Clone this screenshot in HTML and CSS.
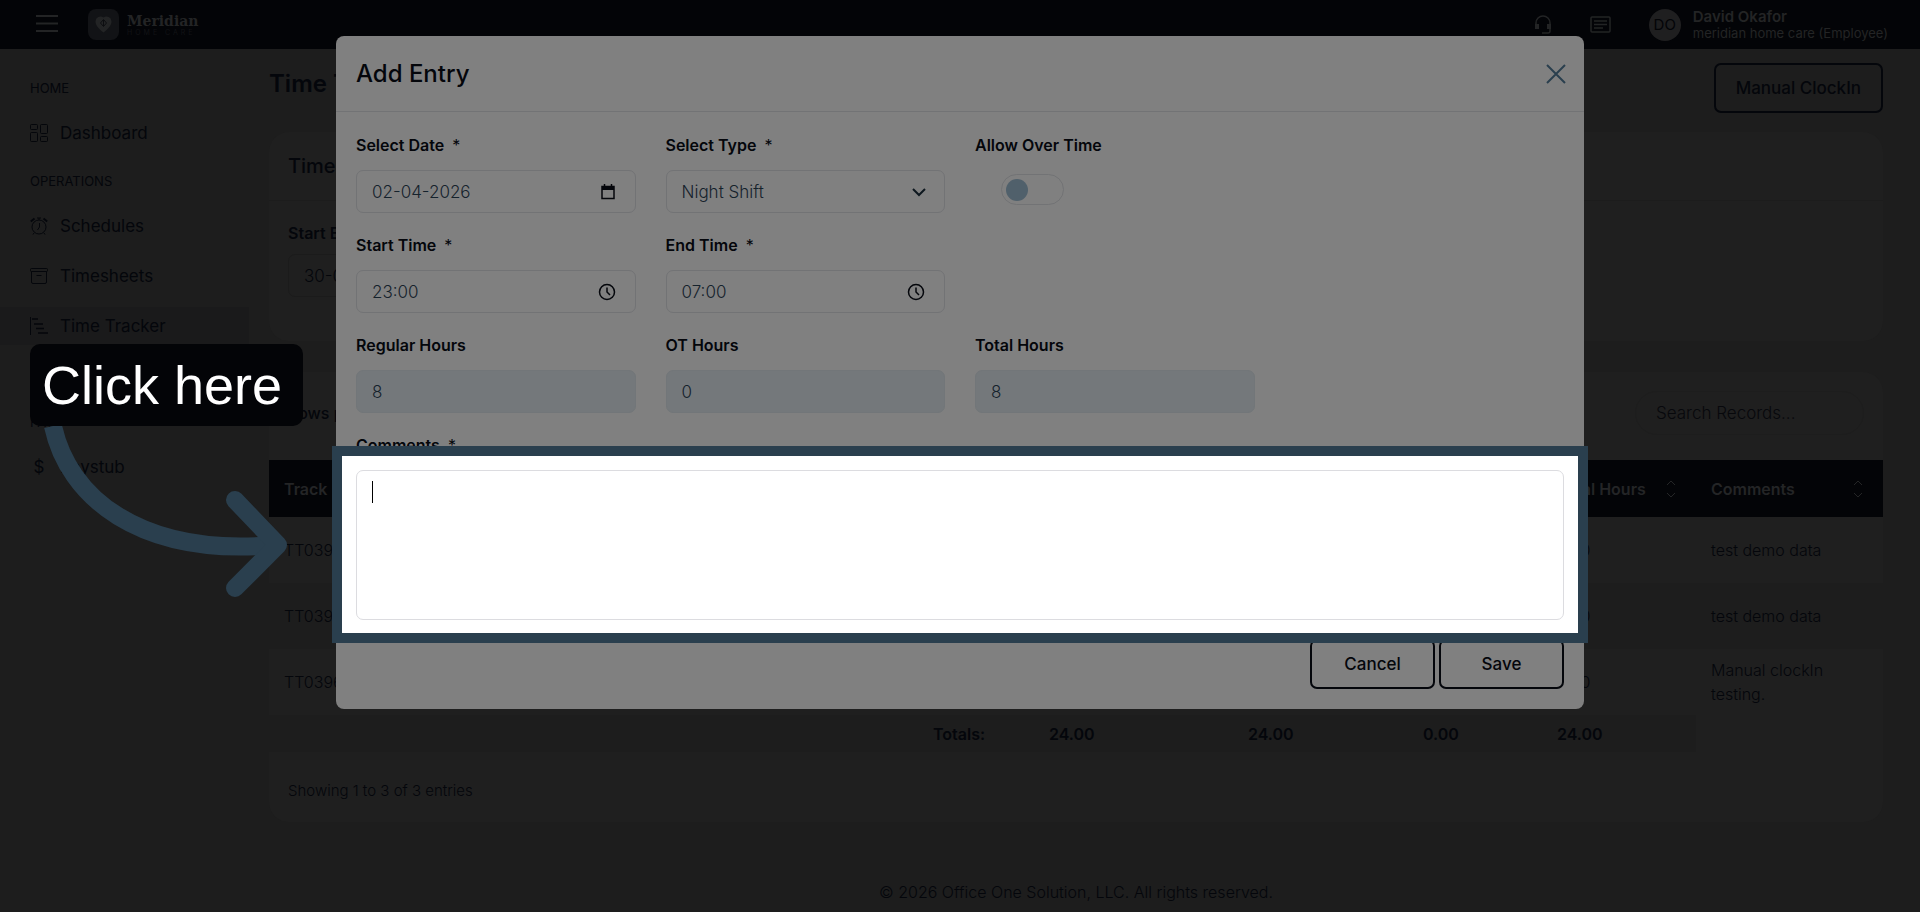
FILE: index.html
```html
<!DOCTYPE html>
<html lang="en">
<head>
  <meta charset="UTF-8" />
  <meta name="viewport" content="width=device-width, initial-scale=1.0" />
  <title>Time Tracker - Meridian Home Care</title>
  <link rel="stylesheet" href="styles.css">
</head>
<body>
  <header class="topbar">
    <button class="icon-btn menu-btn" aria-label="Menu">
      <svg width="22" height="20" viewBox="0 0 22 20" fill="none" stroke="currentColor" stroke-width="2"><path d="M0 1h22M0 8.500h22M0 16h22"/></svg>
    </button>
    <a class="brand" href="#">
      <svg width="31" height="31" viewBox="0 0 31 31"><rect width="31" height="31" rx="8" fill="#121316"/><path d="M15.500 23.500C10 19 7.500 16 7.500 12.500a5 5 0 0 1 8-4 5 5 0 0 1 8 4c0 3.500-2.500 6.500-8 11z" fill="#232425"/><path d="M15.500 11v6M12.500 14l3-3.500 3 3.500-3 3.500z" fill="none" stroke="#0c0d10"/></svg>
      <span class="brand-text"><b>Meridian</b><small>HOME CARE</small></span>
    </a>
    <div class="topbar-right">
      <button class="icon-btn" aria-label="Support">
        <svg width="18" height="20" viewBox="0 0 18 20" fill="none" stroke="currentColor" stroke-width="1.500"><path d="M2 12V8a7 7 0 0 1 14 0v8q0 2-2 2H8"/><path d="M3 9v5M15 9v5" stroke-width="4"/></svg>
      </button>
      <button class="icon-btn" aria-label="Messages">
        <svg width="21" height="17" viewBox="0 0 21 17" fill="none" stroke="currentColor" stroke-width="1.500"><rect x="1" y="1" width="19" height="15" rx="1"/><path d="M4 5h13M4 8.500h13M4 12h9"/></svg>
      </button>
      <div class="user">
        <span class="avatar">DO</span>
        <span class="user-text"><b>David Okafor</b><span>meridian home care (Employee)</span></span>
      </div>
    </div>
  </header>

  <div class="layout">
    <nav class="sidebar">
      <p class="nav-title">HOME</p>
      <a class="nav-item" href="#">
        <svg width="18" height="18" viewBox="0 0 18 18" fill="none" stroke="currentColor"><rect x=".5" y=".5" width="7" height="5" rx="1"/><rect x="10.500" y=".5" width="7" height="9" rx="1"/><rect x=".5" y="8.500" width="7" height="9" rx="1"/><rect x="10.500" y="12.500" width="7" height="5" rx="1"/></svg>
        Dashboard</a>
      <p class="nav-title">OPERATIONS</p>
      <a class="nav-item" href="#">
        <svg width="18" height="18" viewBox="0 0 18 18" fill="none" stroke="currentColor"><circle cx="9" cy="10" r="7"/><path d="M9.500 6v4l-2 3M7 1h4M9 1v2M4 16l-1 1.500M14 16l1 1.500"/><path d="M.8 4.500 4.500 1.500M17.200 4.500l-3.700-3" stroke-width="2"/></svg>
        Schedules</a>
      <a class="nav-item" href="#">
        <svg width="18" height="18" viewBox="0 0 18 18" fill="none" stroke="currentColor"><rect x=".5" y="1.500" width="17" height="3" rx="1"/><path d="M1.500 4.500V15q0 1.500 1.500 1.500h12q1.500 0 1.500-1.500V4.500M6.500 8.500h5"/></svg>
        Timesheets</a>
      <a class="nav-item active" href="#">
        <svg width="18" height="18" viewBox="0 0 18 18" fill="none" stroke="currentColor"><path d="M.5 0v18"/><path d="M2 2h6M4 7h9M6 11.500h8M8 16h10" stroke-width="1.500"/></svg>
        Time Tracker</a>
      <p class="nav-title nav-title-pay">PAY</p>
      <a class="nav-item" href="#"><span class="dollar">$</span>Paystub</a>
    </nav>

    <main class="content">
      <div class="page-head">
        <h1>Time Tracker</h1>
        <button class="outline-btn">Manual ClockIn</button>
      </div>

      <section class="card filter-card">
        <h2>Time Tracker</h2>
        <div class="filter-body">
          <label for="startEntry">Start Entry</label>
          <input class="field" type="text" id="startEntry" value="30-03-2026" />
        </div>
      </section>

      <section class="card records-card">
        <div class="records-bar">
          <span>Rows per page</span>
          <input class="search" type="search" placeholder="Search Records..." aria-label="Search Records" />
        </div>
        <table class="records">
          <colgroup>
            <col class="c-track"><col><col class="c-entry"><col class="c-regular"><col class="c-ot"><col class="c-small"><col class="c-total"><col class="c-comments">
          </colgroup>
          <thead>
            <tr>
              <th>Track ID</th><th></th><th></th><th></th><th></th><th></th>
              <th><div class="th-sort">Total Hours <svg width="10" height="18" viewBox="0 0 10 18" fill="none" stroke="currentColor"><path d="m1 5 4-4 4 4M1 13l4 4 4-4"/></svg></div></th>
              <th><div class="th-sort">Comments <svg width="10" height="18" viewBox="0 0 10 18" fill="none" stroke="currentColor"><path d="m1 5 4-4 4 4M1 13l4 4 4-4"/></svg></div></th>
            </tr>
          </thead>
          <tbody>
            <tr><td>TT0393</td><td></td><td></td><td></td><td></td><td></td><td>8.00</td><td>test demo data</td></tr>
            <tr><td>TT0394</td><td></td><td></td><td></td><td></td><td></td><td>8.00</td><td>test demo data</td></tr>
            <tr><td>TT0396</td><td></td><td></td><td></td><td></td><td></td><td>8.00</td><td>Manual clockIn testing.</td></tr>
          </tbody>
          <tfoot>
            <tr><td></td><td></td><td>Totals:</td><td>24.00</td><td>24.00</td><td>0.00</td><td>24.00</td><td class="no-total"></td></tr>
          </tfoot>
        </table>
        <p class="showing">Showing 1 to 3 of 3 entries</p>
      </section>

      <footer class="copyright">© 2026 Office One Solution, LLC. All rights reserved.</footer>
    </main>
  </div>

  <div class="modal" role="dialog" aria-labelledby="modalTitle">
    <div class="modal-header">
      <h2 id="modalTitle">Add Entry</h2>
      <button class="close-btn" aria-label="Close">
        <svg width="20" height="20" viewBox="0 0 20 20" fill="none" stroke="currentColor" stroke-width="2"><path d="m1 1 18 18M19 1 1 19"/></svg>
      </button>
    </div>
    <form class="modal-body">
      <div class="form-grid">
        <div class="form-group">
          <label for="entryDate">Select Date <span class="req">*</span></label>
          <div class="field-wrap">
            <input class="field" type="text" id="entryDate" value="02-04-2026" />
            <svg class="field-icon" width="16" height="16" viewBox="0 0 16 16" fill="none" stroke="currentColor" stroke-width="1.500"><rect x="2" y="2.500" width="12" height="12"/><path d="M2 4h12" stroke-width="4"/><path d="M4.500 0v3M11.500 0v3"/></svg>
          </div>
        </div>
        <div class="form-group">
          <label for="entryType">Select Type <span class="req">*</span></label>
          <div class="field-wrap">
            <select class="field" id="entryType"><option>Night Shift</option></select>
            <svg class="field-icon select-arrow" width="16" height="16" viewBox="0 0 16 16" fill="none" stroke="#0e181f" stroke-width="2"><path d="m2 5 6 6 6-6"/></svg>
          </div>
        </div>
        <div class="form-group">
          <label for="overTime">Allow Over Time</label>
          <input class="switch" type="checkbox" id="overTime" />
        </div>
        <div class="form-group first-col">
          <label for="startTime">Start Time <span class="req">*</span></label>
          <div class="field-wrap">
            <input class="field" type="text" id="startTime" value="23:00" />
            <svg class="field-icon" width="18" height="18" viewBox="0 0 18 18" fill="none" stroke="currentColor" stroke-width="1.500"><circle cx="9" cy="9" r="7.500"/><path d="M9 4.500V9l3 3"/></svg>
          </div>
        </div>
        <div class="form-group">
          <label for="endTime">End Time <span class="req">*</span></label>
          <div class="field-wrap">
            <input class="field" type="text" id="endTime" value="07:00" />
            <svg class="field-icon" width="18" height="18" viewBox="0 0 18 18" fill="none" stroke="currentColor" stroke-width="1.500"><circle cx="9" cy="9" r="7.500"/><path d="M9 4.500V9l3 3"/></svg>
          </div>
        </div>
        <div class="form-group first-col">
          <label for="regularHours">Regular Hours</label>
          <input class="field" type="text" id="regularHours" value="8" disabled />
        </div>
        <div class="form-group">
          <label for="otHours">OT Hours</label>
          <input class="field" type="text" id="otHours" value="0" disabled />
        </div>
        <div class="form-group">
          <label for="totalHours">Total Hours</label>
          <input class="field" type="text" id="totalHours" value="8" disabled />
        </div>
      </div>
      <div class="form-group">
        <label for="comments">Comments <span class="req">*</span></label>
        <div class="spotlight">
          <textarea id="comments"></textarea>
          <span class="caret"></span>
        </div>
      </div>
      <div class="modal-actions">
        <button class="outline-btn" type="button">Cancel</button>
        <button class="outline-btn" type="submit">Save</button>
      </div>
    </form>
  </div>

  <!-- guide callout -->
  <div class="callout">
    <span class="callout-label">Click here</span>
    <svg class="callout-arrow" width="260" height="180" viewBox="0 0 260 180" fill="none" stroke="#2a3f4e" stroke-width="18">
      <path d="M23 0C38 70 108 131 245 119"/>
      <path d="M205 74l43 45-43 43" stroke-linecap="round" stroke-linejoin="round"/>
    </svg>
  </div>
</body>
</html>
```
FILE: styles.css
```css
* {
  box-sizing: border-box;
}
body {
  margin: 0;
  min-height: 100vh;
  background: #1d1d1d;
  color: #04060b;
  font-family: Inter, "Open Sans", sans-serif;
  font-size: 16px;
  line-height: 24px;
}
h1, h2, p {
  margin: 0;
}
button, input, select, textarea {
  font: inherit;
  color: inherit;
}
a {
  color: inherit;
  text-decoration: none;
}

/* top bar */
.topbar {
  display: flex;
  align-items: center;
  height: 49px;
  padding: 0 32px 0 36px;
  background: #030407;
  color: #232425;
}
.icon-btn {
  display: flex;
  padding: 0;
  border: none;
  background: none;
  cursor: pointer;
}
.brand {
  display: flex;
  align-items: center;
  gap: 8px;
  margin-left: 30px;
}
.brand-text {
  display: flex;
  flex-direction: column;
  font-family: "DejaVu Serif", serif;
}
.brand-text b {
  font-size: 14px;
  line-height: 16px;
}
.brand-text small {
  font-family: Inter, sans-serif;
  font-size: 7px;
  line-height: 8px;
  letter-spacing: 3px;
  color: #121316;
}
.topbar-right {
  display: flex;
  align-items: center;
  gap: 38px;
  margin-left: auto;
}
.user {
  display: flex;
  align-items: center;
  gap: 12px;
}
.avatar {
  width: 32px;
  height: 32px;
  border-radius: 50%;
  background: #1f1f20;
  color: #030407;
  font-size: 15px;
  line-height: 32px;
  text-align: center;
}
.user-text {
  display: flex;
  flex-direction: column;
  font-size: 13px;
  line-height: 16px;
}
.user-text b {
  font-size: 15px;
  font-weight: 600;
}

/* sidebar */
.layout {
  display: flex;
}
.sidebar {
  width: 249px;
  flex-shrink: 0;
  padding-top: 22px;
}
.nav-title {
  padding: 0 30px;
  font-size: 13px;
  line-height: 34px;
}
.nav-item {
  display: flex;
  align-items: center;
  gap: 12px;
  height: 38px;
  margin: 9px 0 12px;
  padding: 0 30px;
  font-size: 17px;
}
.nav-item.active {
  background: #1a1a1b;
}
.nav-title-pay {
  margin-top: 60px;
}
.dollar {
  width: 18px;
  text-align: center;
}

/* content */
.content {
  flex: 1;
  padding: 14px 37px 0 20px;
}
.page-head {
  display: flex;
  align-items: flex-start;
  justify-content: space-between;
  height: 51px;
  margin-bottom: 18px;
}
.page-head h1 {
  font-size: 24px;
  font-weight: 600;
  line-height: 42px;
}
.outline-btn {
  height: 50px;
  padding: 0 20px;
  border: 2px solid #04060b;
  border-radius: 7px;
  background: none;
  font-size: 17px;
  font-weight: 500;
  cursor: pointer;
}
.card {
  border-radius: 20px;
  background: #1f1f1f;
}
.filter-card {
  height: 209px;
  margin-bottom: 31px;
}
.filter-card h2 {
  padding: 0 19px;
  border-bottom: 1px solid #1c1c1c;
  font-size: 20px;
  font-weight: 500;
  line-height: 68px;
}
.filter-body {
  width: 320px;
  padding: 20px 19px;
}
label {
  display: block;
  margin-bottom: 13px;
  font-weight: 600;
  line-height: 24px;
}
.filter-body label {
  margin-bottom: 9px;
}
.field {
  display: block;
  width: 100%;
  height: 43px;
  padding: 0 15px;
  border: 1px solid #1b1b1b;
  border-radius: 7px;
  background: none;
  font-size: 17px;
  font-weight: 300;
}
.records-bar {
  display: flex;
  align-items: center;
  justify-content: space-between;
  height: 88px;
  padding: 0 19px 6px;
  font-weight: 500;
}
.search {
  width: 229px;
  height: 44px;
  padding: 0 20px;
  border: 1px solid #1d1d1d;
  border-radius: 22px;
  background: none;
  font-size: 17px;
  font-weight: 300;
}
.search::placeholder {
  color: #07080c;
}
.records {
  width: 100%;
  border-collapse: collapse;
  table-layout: fixed;
  font-size: 16px;
  font-weight: 300;
}
.c-track { width: 131px; }
.c-entry { width: 116px; }
.c-regular { width: 199px; }
.c-ot { width: 175px; }
.c-small { width: 134px; }
.c-total { width: 154px; }
.c-comments { width: 187px; }
.records th {
  height: 57px;
  padding: 0 15px;
  background: #030407;
  color: #242526;
  font-size: 16px;
  font-weight: 600;
  text-align: left;
}
.th-sort {
  display: flex;
  align-items: center;
  justify-content: space-between;
  padding-right: 5px;
}
.records td {
  height: 66px;
  padding: 0 15px;
}
.records tbody tr:nth-child(even) td {
  background: #1d1d1d;
}
.records tfoot td {
  height: 37px;
  background: #1d1d1d;
  font-weight: 600;
}
.records tfoot td.no-total {
  background: none;
}
.showing {
  padding: 27px 19px 19px;
  font-size: 15px;
  font-weight: 300;
}
.copyright {
  padding-top: 58px;
  font-weight: 300;
  text-align: center;
}

/* add entry modal */
.modal {
  position: absolute;
  top: 36px;
  left: 50%;
  width: 65%;
  transform: translateX(-50%);
  border-radius: 8px;
  background: #808080;
}
.modal-header {
  display: flex;
  align-items: center;
  justify-content: space-between;
  height: 76px;
  padding: 0 18px 0 20px;
  border-bottom: 1px solid #727375;
}
.modal-header h2 {
  font-size: 24px;
  font-weight: 500;
}
.close-btn {
  display: flex;
  padding: 0;
  border: none;
  background: none;
  color: #2a3f4e;
  cursor: pointer;
}
.modal-body {
  padding: 21px 20px 20px;
}
.form-grid {
  display: grid;
  grid-template-columns: repeat(4, 1fr);
  gap: 19px 30px;
  margin-bottom: 19px;
}
.form-grid .form-group {
  height: 81px;
}
.first-col {
  grid-column-start: 1;
}
.req {
  margin-left: 4px;
  font-weight: 400;
}
.modal .field {
  border-color: #727375;
  color: #15222c;
}
.modal .field:disabled {
  background: #74787b;
  border-color: #727679;
}
select.field {
  appearance: none;
}
.field-wrap {
  position: relative;
}
.field-icon {
  position: absolute;
  top: 0;
  bottom: 0;
  right: 20px;
  margin: auto 0;
  pointer-events: none;
}
.select-arrow {
  right: 18px;
}
.switch {
  appearance: none;
  display: block;
  width: 63px;
  height: 31px;
  margin: 17px 0 0 26px;
  padding: 4px;
  border: 1px solid #727375;
  border-radius: 16px;
}
.switch::before {
  content: "";
  display: block;
  width: 22px;
  height: 22px;
  border-radius: 50%;
  background: #50606b;
}
/* framed comment box, drawn over the label and the buttons */
.spotlight {
  position: relative;
  z-index: 1;
}
.spotlight::before {
  content: "";
  position: absolute;
  inset: -24px -24px -23px;
  border: 10px solid #2a3f4e;
  background: #fff;
}
.spotlight textarea {
  position: relative;
  display: block;
  width: 100%;
  height: 150px;
  padding: 10px 15px;
  border: 1px solid #dcdce0;
  border-radius: 7px;
  background: #fff;
  resize: none;
}
.caret {
  position: absolute;
  top: 11px;
  left: 16px;
  width: 1px;
  height: 22px;
  background: #000;
}
.modal-actions {
  display: flex;
  justify-content: flex-end;
  gap: 4px;
  margin-top: 19px;
}
.modal-actions .outline-btn {
  width: 125px;
}

/* callout */
.callout {
  position: absolute;
  top: 344px;
  left: 30px;
}
.callout-label {
  display: block;
  width: 273px;
  padding-left: 12px;
  border-radius: 10px;
  background: #030407;
  color: #fff;
  font-family: "Liberation Sans", Arial, sans-serif;
  font-size: 54px;
  line-height: 82px;
  white-space: nowrap;
}
.callout-arrow {
  display: block;
}
```
